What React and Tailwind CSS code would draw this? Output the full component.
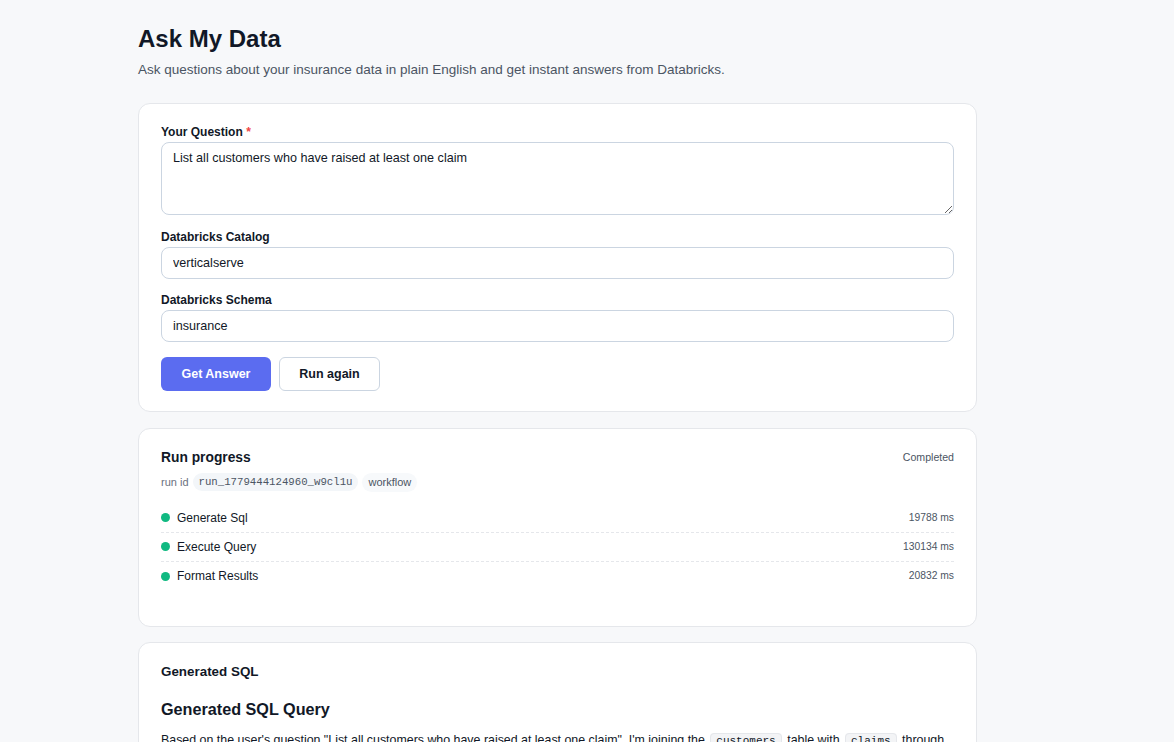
export default function App() {
  const steps = [
    { name: "Generate Sql", ms: "19788 ms" },
    { name: "Execute Query", ms: "130134 ms" },
    { name: "Format Results", ms: "20832 ms" },
  ];

  const mono = { fontFamily: '"Liberation Mono", "DejaVu Sans Mono", monospace' };

  return (
    <div
      className="min-h-screen bg-[#f7f8fa] text-[#111827]"
      style={{ fontFamily: '"Liberation Sans", Arial, sans-serif' }}
    >
      <div className="ml-[138px] w-[839px] pt-[24px] pb-10">
        <h1 className="text-[24px] leading-[30px] font-bold text-[#111827]">Ask My Data</h1>
        <p className="mt-[7px] text-[13.5px] leading-[18px] text-[#4b5563]">
          Ask questions about your insurance data in plain English and get instant answers from Databricks.
        </p>

        {/* question form */}
        <div className="mt-[24px] bg-white border border-[#e5e7eb] rounded-xl px-[22px] pt-[21px] pb-[20px]">
          <label className="block text-[12px] leading-[14px] font-bold mb-[3px]">
            Your Question <span className="text-[#ef4444]">*</span>
          </label>
          <textarea
            defaultValue="List all customers who have raised at least one claim"
            className="block w-full h-[73px] rounded-lg border border-[#cbd5e1] px-[11px] py-[7px] text-[12.6px] leading-[16px] text-[#111827] outline-none resize-y"
          />

          <label className="block mt-[15px] text-[12px] leading-[14px] font-bold mb-[3px]">
            Databricks Catalog
          </label>
          <input
            defaultValue="verticalserve"
            className="block w-full h-[32px] rounded-lg border border-[#cbd5e1] px-[11px] text-[12.6px] text-[#111827] outline-none"
          />

          <label className="block mt-[14px] text-[12px] leading-[14px] font-bold mb-[3px]">
            Databricks Schema
          </label>
          <input
            defaultValue="insurance"
            className="block w-full h-[32px] rounded-lg border border-[#cbd5e1] px-[11px] text-[12.6px] text-[#111827] outline-none"
          />

          <div className="flex gap-2 mt-[15px]">
            <button className="w-[110px] h-[34px] rounded-md bg-[#5b6cf0] text-white text-[12.5px] font-bold">
              Get Answer
            </button>
            <button className="w-[101px] h-[34px] rounded-md bg-white border border-[#cbd5e1] text-[#111827] text-[12.5px] font-bold">
              Run again
            </button>
          </div>
        </div>

        {/* run progress */}
        <div className="mt-[16px] bg-white border border-[#e5e7eb] rounded-xl px-[22px] pt-[20px] pb-[35px]">
          <div className="flex items-center justify-between">
            <h2 className="text-[13.8px] leading-[18px] font-bold">Run progress</h2>
            <span className="text-[10.6px] text-[#4b5563]">Completed</span>
          </div>
          <div className="flex items-center mt-[6px] text-[11px] text-[#6b7280]">
            <span>run id</span>
            <span
              className="ml-[4px] px-[6px] py-[1px] rounded-full bg-[#f3f6f9] text-[#4b5563] text-[10.7px]"
              style={mono}
            >
              run_1779444124960_w9cl1u
            </span>
            <span className="ml-[4px] px-[6px] py-[1px] rounded-full bg-[#f7f9fb] text-[#4b5563]">workflow</span>
          </div>

          <div className="mt-[12px]">
            {steps.map((s, i) => (
              <div
                key={s.name}
                className={
                  "flex items-center justify-between h-[29px] " +
                  (i < steps.length - 1 ? "border-b border-dashed border-[#e5e7eb]" : "")
                }
              >
                <div className="flex items-center gap-[7px]">
                  <span className="w-[9px] h-[9px] rounded-full bg-[#10b981]" />
                  <span className="text-[12px] text-[#111827]">{s.name}</span>
                </div>
                <span className="text-[10.3px] text-[#4b5563]">{s.ms}</span>
              </div>
            ))}
          </div>
        </div>

        {/* generated sql */}
        <div className="mt-[15px] bg-white border border-[#e5e7eb] rounded-xl px-[22px] pt-[20px] pb-[24px]">
          <h2 className="text-[13.4px] leading-[18px] font-bold">Generated SQL</h2>
          <h3 className="mt-[17px] text-[16.2px] leading-[22px] font-bold">Generated SQL Query</h3>
          <p className="mt-[10px] text-[12.4px] leading-[20px] text-[#111827]">
            Based on the user's question "List all customers who have raised at least one claim". I'm joining the{" "}
            <code
              className="mx-[2px] px-[5px] py-[1px] rounded border border-[#e5e7eb] bg-[#f3f4f6] text-[11px]"
              style={mono}
            >
              customers
            </code>{" "}
            table with{" "}
            <code
              className="mx-[2px] px-[5px] py-[1px] rounded border border-[#e5e7eb] bg-[#f3f4f6] text-[11px]"
              style={mono}
            >
              claims
            </code>{" "}
            through the policies table to find every customer with at least one claim on record.
          </p>
        </div>
      </div>
    </div>
  );
}
